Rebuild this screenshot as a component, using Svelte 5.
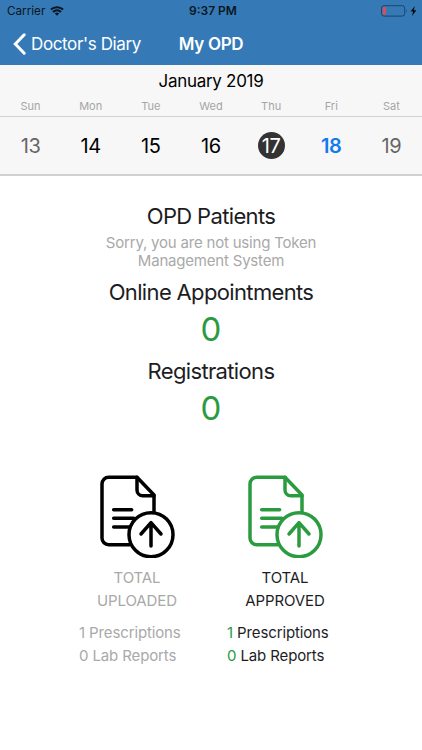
<script lang="ts">
    let days = [
        { name: "Sun", date: 13, state: "weekend" },
        { name: "Mon", date: 14, state: "" },
        { name: "Tue", date: 15, state: "" },
        { name: "Wed", date: 16, state: "" },
        { name: "Thu", date: 17, state: "selected" },
        { name: "Fri", date: 18, state: "today" },
        { name: "Sat", date: 19, state: "weekend" },
    ];

    let totals = [
        { label: "UPLOADED", state: "uploaded", prescriptions: 1, reports: 0 },
        { label: "APPROVED", state: "approved", prescriptions: 1, reports: 0 },
    ];
</script>

<div class="screen">
    <header>
        <div class="statusBar">
            <div class="carrier">
                <span>Carrier</span>
                <svg width="14" height="10" viewBox="0 0 14 10" aria-hidden="true">
                    <path d="M.9 3.6a8.9 8.9 0 0 1 12.2 0M3 6a5.8 5.8 0 0 1 8 0" fill="none" stroke="#0a1622" stroke-width="2.1" />
                    <path d="M7 9.8 4.8 7.6a3.1 3.1 0 0 1 4.4 0z" fill="#0a1622" />
                </svg>
            </div>
            <span class="time">9:37 PM</span>
            <div class="battery">
                <svg width="36" height="12" viewBox="0 0 36 12" aria-hidden="true">
                    <rect x=".5" y=".7" width="23.2" height="10.4" rx="2.5" fill="none" stroke="#1d4468" />
                    <rect x="1.8" y="2" width="3.3" height="7.8" rx="1" fill="#d2505f" />
                    <path d="M25 4.2q1.4 1.7 0 3.5z" fill="#1d4468" />
                    <path d="M33.8 1 29.6 6.5h2.5L31 11l4.4-5.7h-2.6z" fill="#05090d" />
                </svg>
            </div>
        </div>
        <nav>
            <button class="back">
                <svg width="13" height="22" viewBox="0 0 13 22" aria-hidden="true">
                    <path d="M11.2 1.8 2.3 11l8.9 9.2" fill="none" stroke="#fff" stroke-width="3" stroke-linecap="round" />
                </svg>
                <span>Doctor's Diary</span>
            </button>
            <h1>My OPD</h1>
        </nav>
    </header>

    <section class="calendar">
        <h2>January 2019</h2>
        <div class="week names">
            {#each days as day}
                <span>{day.name}</span>
            {/each}
        </div>
        <div class="week dates">
            {#each days as day}
                <span class="date {day.state}">{day.date}</span>
            {/each}
        </div>
    </section>

    <main>
        <h3>OPD Patients</h3>
        <p class="notice">Sorry, you are not using Token<br />Management System</p>
        <h3 class="online">Online Appointments</h3>
        <div class="count">0</div>
        <h3 class="registrations">Registrations</h3>
        <div class="count">0</div>

        <div class="totals">
            {#each totals as total}
                <div class="total {total.state}">
                    <svg width="76" height="83" viewBox="56 31 228 249" aria-hidden="true">
                        <g fill="none" stroke="currentColor" stroke-width="10.5" stroke-linecap="round" stroke-linejoin="round">
                            <path d="M148 240H85a20 20 0 0 1-20-20V58a20 20 0 0 1 20-20h85l51 53v49" />
                            <path d="M170 38v38a17 17 0 0 0 17 17h34" />
                            <path d="M100 135h54M100 161h60M100 187h46" />
                            <circle cx="212" cy="210" r="66" fill="#fff" />
                            <path d="M212 244v-70M182 208l30-34 30 34" />
                        </g>
                    </svg>
                    <div class="label">TOTAL<br />{total.label}</div>
                    <div class="details">
                        <div><b>{total.prescriptions}</b> Prescriptions</div>
                        <div><b>{total.reports}</b> Lab Reports</div>
                    </div>
                </div>
            {/each}
        </div>
    </main>
</div>

<style>
    :global(body) {
        margin: 0;
        background: #fff;
    }

    .screen {
        height: 750px;
        overflow: hidden;
        font-family: Inter, "Liberation Sans", sans-serif;
        color: #1d1d1f;
    }

    header {
        height: 65px;
        background: #357ab6;
    }

    .statusBar {
        display: grid;
        grid-template-columns: 1fr auto 1fr;
        align-items: center;
        height: 22px;
        padding: 0 5px 0 7px;
        font-size: 11.7px;
        color: #0a1622;
    }

    .carrier {
        display: flex;
        align-items: center;
        gap: 5px;
    }

    .time {
        padding: 0 0 1px 2px;
        font-size: 12px;
        font-weight: 600;
    }

    .battery {
        display: flex;
        justify-content: flex-end;
    }

    nav {
        display: grid;
        grid-template-columns: 1fr auto 1fr;
        align-items: center;
        height: 43px;
    }

    .back {
        display: flex;
        align-items: center;
        gap: 5px;
        padding: 0 0 0 13px;
        border: none;
        background: none;
        color: #fff;
        font: inherit;
        font-size: 17px;
        letter-spacing: -0.37px;
        white-space: nowrap;
    }

    h1,
    h2,
    h3 {
        margin: 0;
        font-weight: 400;
    }

    h1 {
        font-size: 17px;
        font-weight: 600;
        letter-spacing: -0.3px;
        color: #fff;
    }

    .calendar {
        height: 109px;
        background: #f7f7f7;
        border-bottom: 2px solid #d0d0d0;
        text-align: center;
    }

    h2 {
        padding-top: 5px;
        font-size: 17px;
        line-height: 22px;
        letter-spacing: -0.3px;
        color: #000;
    }

    .week {
        display: grid;
        grid-template-columns: repeat(7, 60.15px);
        justify-content: center;
    }

    .names {
        height: 24px;
        border-bottom: 1px solid #d2d2d2;
        font-size: 11px;
        line-height: 28px;
        color: #a5a5a5;
    }

    .dates {
        height: 57px;
        align-items: center;
        justify-items: center;
        font-size: 20px;
        letter-spacing: -0.4px;
        color: #000;
    }

    .date {
        width: 27px;
        height: 27px;
        line-height: 28px;
    }

    .weekend {
        color: #666;
    }

    .selected {
        border-radius: 50%;
        background: #333;
        color: #fff;
    }

    .today {
        font-weight: 600;
        color: #137cec;
    }

    main {
        padding-top: 26px;
        text-align: center;
    }

    h3 {
        font-size: 22px;
        line-height: 28px;
        letter-spacing: -0.65px;
    }

    .notice {
        margin: 4px 0 0;
        font-size: 15px;
        line-height: 18px;
        letter-spacing: -0.2px;
        color: #a9a9a9;
    }

    .online {
        margin-top: 8px;
    }

    .count {
        padding-top: 1px;
        font-size: 33px;
        font-weight: 400;
        line-height: 44px;
        color: #2b9b40;
    }

    .registrations {
        margin-top: 6px;
    }

    .totals {
        display: grid;
        grid-template-columns: 148px 148px;
        justify-content: center;
        margin-top: 45px;
    }

    .total svg {
        display: block;
        margin: 0 0 0 35.5px;
    }

    .label {
        margin-top: 9px;
        font-size: 15px;
        line-height: 22.5px;
        letter-spacing: -0.1px;
    }

    .details {
        margin-top: 10px;
        padding-left: 16px;
        font-size: 15px;
        line-height: 22.5px;
        letter-spacing: -0.13px;
        text-align: left;
    }

    .details b {
        font-weight: 400;
    }

    .uploaded {
        color: #a9a9a9;
    }

    .uploaded svg {
        color: #000;
    }

    .approved svg,
    .approved b {
        color: #2b9b40;
    }
</style>
